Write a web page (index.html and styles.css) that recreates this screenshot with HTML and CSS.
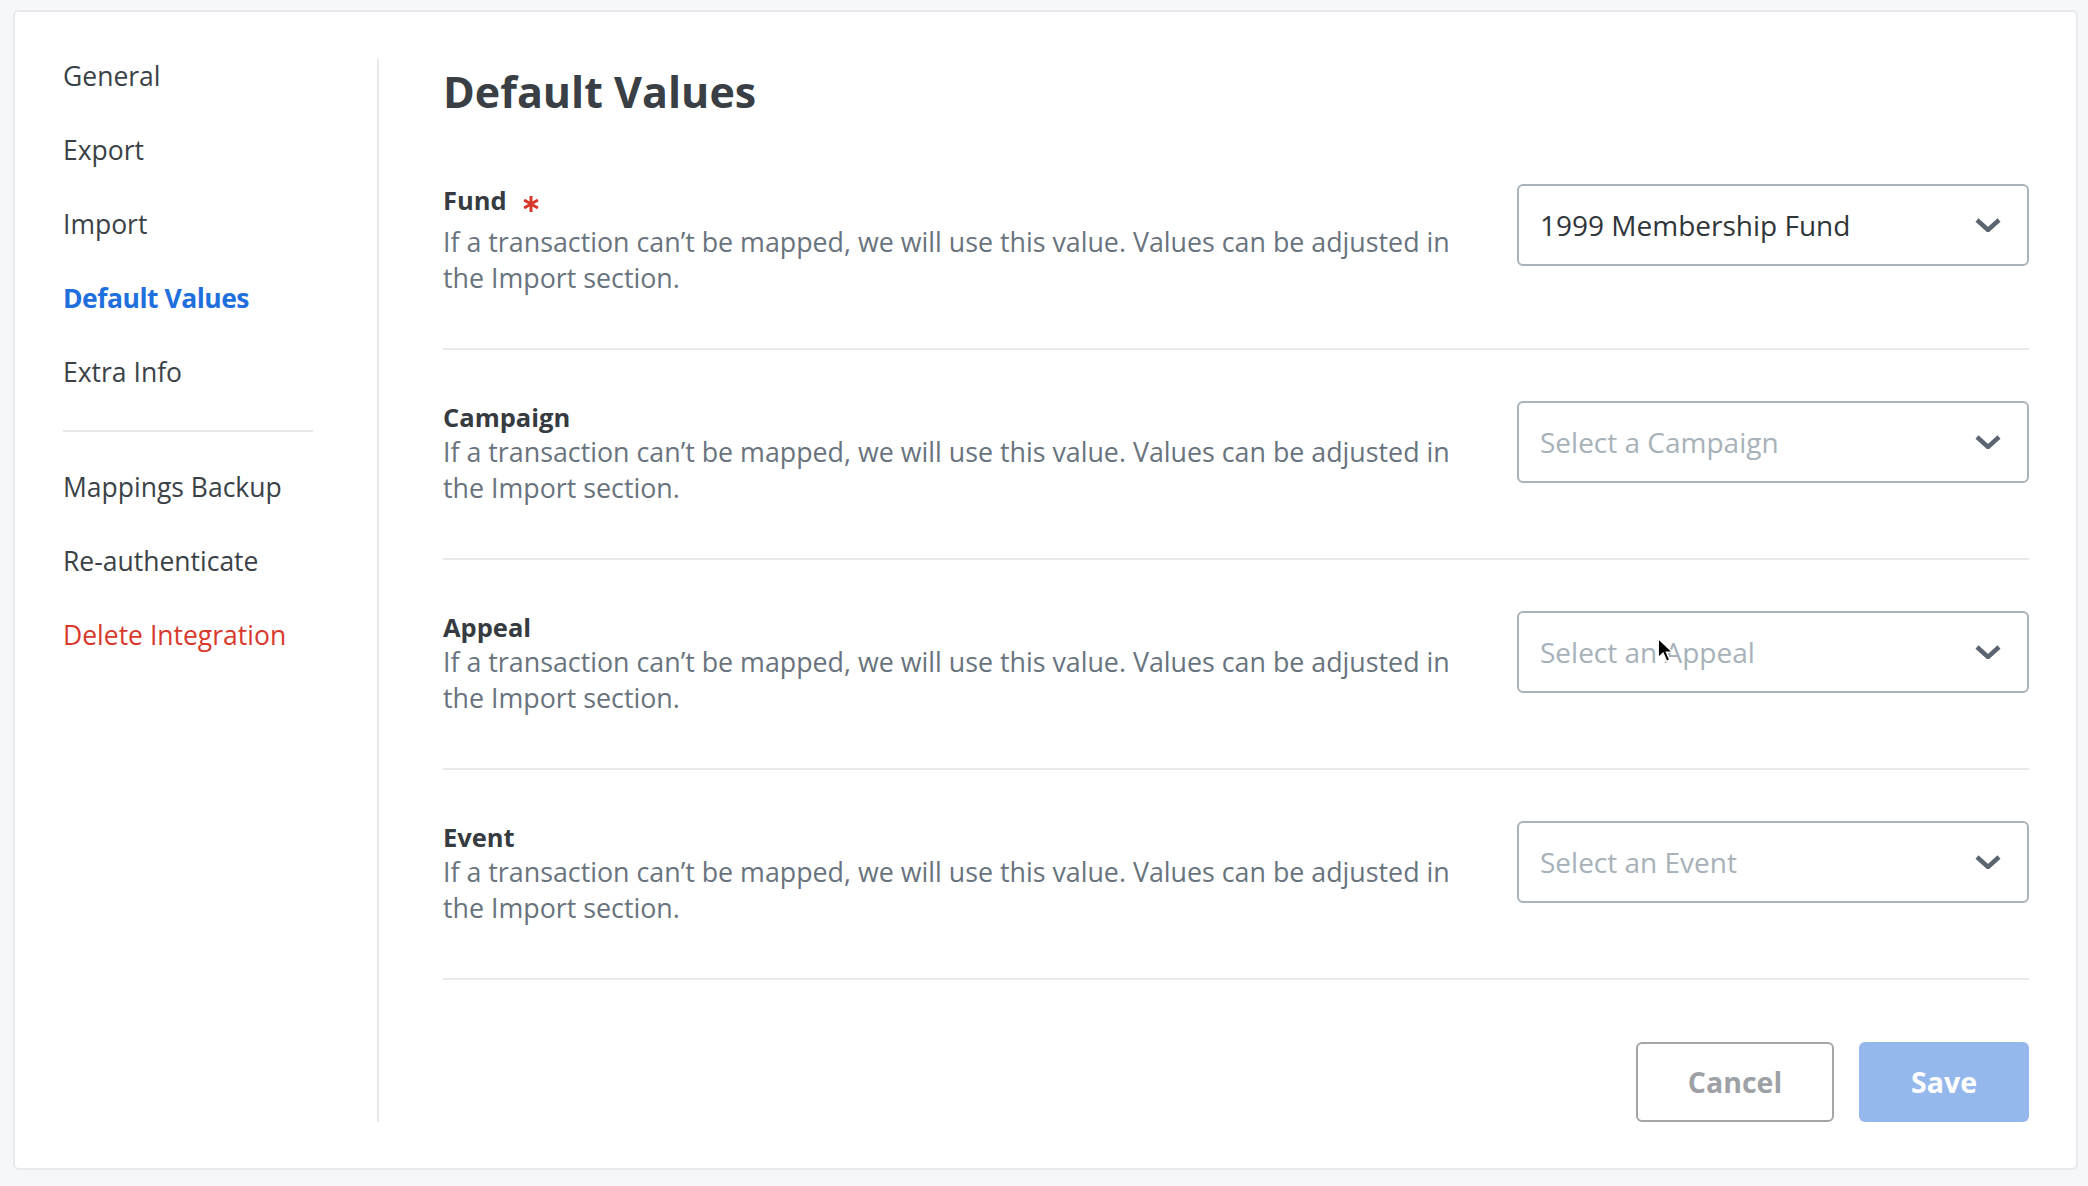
FILE: index.html
```html
<!DOCTYPE html>
<html lang="en">
<head>
  <meta charset="UTF-8" />
  <meta name="viewport" content="width=device-width, initial-scale=1" />
  <title>Default Values – Integration Settings</title>
  <link rel="stylesheet" href="styles.css">
</head>
<body>

  <div class="card">
    <nav class="sidebar">
      <a class="nav-item" href="#">General</a>
      <a class="nav-item" href="#">Export</a>
      <a class="nav-item" href="#">Import</a>
      <a class="nav-item active" href="#">Default Values</a>
      <a class="nav-item" href="#">Extra Info</a>
      <div class="nav-divider"></div>
      <a class="nav-item" href="#">Mappings Backup</a>
      <a class="nav-item" href="#">Re-authenticate</a>
      <a class="nav-item danger" href="#">Delete Integration</a>
    </nav>

    <main class="main">
      <h1>Default Values</h1>

      <div class="field">
        <div class="field-text">
          <div class="field-label required">Fund
            <svg class="star" viewBox="0 0 16 18"><path d="M8 1 V17 M1.1 5 L14.9 13 M1.1 13 L14.9 5" /></svg>
          </div>
          <p class="field-desc">If a transaction can’t be mapped, we will use this value. Values can be adjusted in the Import section.</p>
        </div>
        <div class="select">
          <span class="select-value">1999 Membership Fund</span>
          <svg class="chevron" viewBox="0 0 26 14"><polyline points="2,2 13,12 24,2" /></svg>
        </div>
      </div>

      <div class="field">
        <div class="field-text">
          <div class="field-label">Campaign</div>
          <p class="field-desc">If a transaction can’t be mapped, we will use this value. Values can be adjusted in the Import section.</p>
        </div>
        <div class="select">
          <span class="select-placeholder">Select a Campaign</span>
          <svg class="chevron" viewBox="0 0 26 14"><polyline points="2,2 13,12 24,2" /></svg>
        </div>
      </div>

      <div class="field">
        <div class="field-text">
          <div class="field-label">Appeal</div>
          <p class="field-desc">If a transaction can’t be mapped, we will use this value. Values can be adjusted in the Import section.</p>
        </div>
        <div class="select">
          <span class="select-placeholder">Select an Appeal</span>
          <svg class="chevron" viewBox="0 0 26 14"><polyline points="2,2 13,12 24,2" /></svg>
        </div>
      </div>

      <div class="field">
        <div class="field-text">
          <div class="field-label">Event</div>
          <p class="field-desc">If a transaction can’t be mapped, we will use this value. Values can be adjusted in the Import section.</p>
        </div>
        <div class="select">
          <span class="select-placeholder">Select an Event</span>
          <svg class="chevron" viewBox="0 0 26 14"><polyline points="2,2 13,12 24,2" /></svg>
        </div>
      </div>

      <div class="actions">
        <button class="btn btn-cancel" type="button">Cancel</button>
        <button class="btn btn-save" type="button">Save</button>
      </div>
    </main>
  </div>

  <!-- mouse pointer from the screenshot -->
  <svg class="cursor" viewBox="0 0 14 22">
    <path d="M1 1 L1 17 L5 13.2 L8 20 L10.6 18.8 L7.8 12.4 L13 12.4 Z" />
  </svg>

</body>
</html>
```

FILE: styles.css
```css
body {
  margin: 0;
  padding: 10px 10px 13px 13px;
  background-color: #f6f7f9;
  font-family: 'Open Sans', sans-serif;
  position: relative;
}

.card {
  display: flex;
  background: #fff;
  border: 2px solid #e7e9ec;
  border-radius: 6px;
  padding: 47px 47px 46px 0;
}

/* left menu */
.sidebar {
  width: 364px;
  box-sizing: border-box;
  padding-left: 48px;
  border-right: 2px solid #e8e9ec;
  display: flex;
  flex-direction: column;
  align-items: flex-start;
}

.nav-item {
  display: block;
  font-size: 26.5px;
  line-height: 34px;
  color: #3b4247;
  text-decoration: none;
  margin-bottom: 40px;
}

.nav-item.active {
  color: #1f6fdc;
  font-weight: 700;
  letter-spacing: -0.5px;
}

.nav-item.danger {
  color: #d8392c;
}

.nav-divider {
  width: 250px;
  height: 2px;
  background: #e6e8eb;
  margin: 1px 0 38px;
}

/* content */
.main {
  flex: 1;
  padding-left: 64px;
}

h1 {
  margin: 0 0 8px;
  font-size: 43px;
  line-height: 66px;
  font-weight: 700;
  color: #393f44;
}

.field {
  display: flex;
  justify-content: space-between;
  align-items: flex-start;
  gap: 40px;
  padding: 51px 0 52px;
  border-bottom: 2px solid #e9eaec;
}

.field-text {
  flex: 1;
  max-width: 1040px;
}

.field-label {
  font-size: 25.5px;
  line-height: 33px;
  font-weight: 700;
  color: #353b40;
}

.field-label.required {
  margin-bottom: 7px;
}

.star {
  width: 16px;
  height: 18px;
  margin-left: 10px;
  vertical-align: -3px;
}

.star path {
  fill: none;
  stroke: #d8382c;
  stroke-width: 3;
}

.field-desc {
  margin: 0;
  font-size: 26.8px;
  line-height: 36px;
  color: #68737d;
}

.select {
  width: 512px;
  height: 82px;
  box-sizing: border-box;
  flex-shrink: 0;
  border: 2px solid #a9b3bb;
  border-radius: 6px;
  display: flex;
  align-items: center;
  justify-content: space-between;
  padding: 0 26px 0 21px;
  font-size: 28px;
}

.select-value {
  color: #2f3539;
}

.select-placeholder {
  color: #a7b1b9;
}

.chevron {
  width: 26px;
  height: 14px;
}

.chevron polyline {
  fill: none;
  stroke: #5b6670;
  stroke-width: 4.5;
}

.actions {
  display: flex;
  justify-content: flex-end;
  gap: 25px;
  padding-top: 62px;
}

.btn {
  height: 80px;
  box-sizing: border-box;
  border-radius: 6px;
  font-family: 'Open Sans', sans-serif;
  font-size: 28.5px;
  font-weight: 700;
  cursor: pointer;
}

.btn-cancel {
  width: 198px;
  background: #fff;
  border: 2px solid #a3a6a9;
  color: #9da1a5;
}

.btn-save {
  width: 170px;
  background: #95b8ec;
  border: none;
  color: #fff;
}

.cursor {
  position: absolute;
  left: 1657px;
  top: 637px;
  width: 17px;
  height: 27px;
}

.cursor path {
  fill: #000;
  stroke: #fff;
  stroke-width: 1.2;
}
```
